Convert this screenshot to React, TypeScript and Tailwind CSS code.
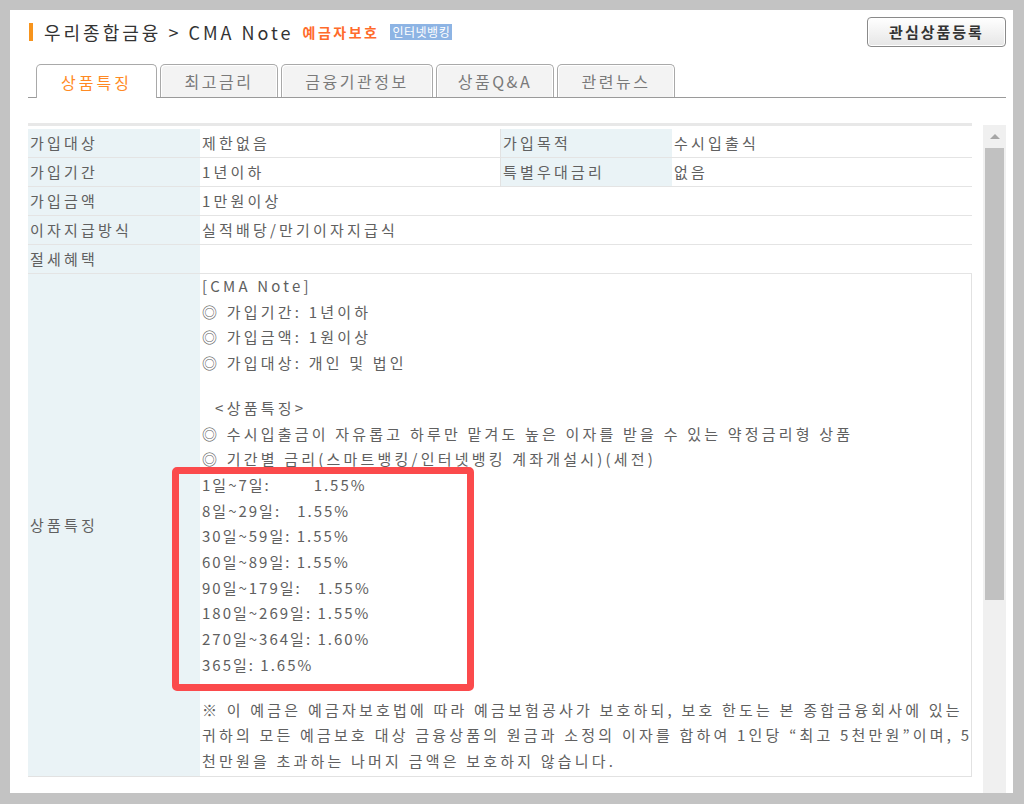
import React from "react";

const tabs = [
  { label: "상품특징", w: "w-[121px]", active: true },
  { label: "최고금리", w: "w-[118px]" },
  { label: "금융기관정보", w: "w-[152px]" },
  { label: "상품Q&A", w: "w-[118px]" },
  { label: "관련뉴스", w: "w-[118px]" },
];

const rates = [
  "1일~7일:        1.55%",
  "8일~29일:   1.55%",
  "30일~59일: 1.55%",
  "60일~89일: 1.55%",
  "90일~179일:   1.55%",
  "180일~269일: 1.55%",
  "270일~364일: 1.60%",
  "365일: 1.65%",
];

function Label({ children, className = "" }: { children?: React.ReactNode; className?: string }) {
  return (
    <div className={"bg-[#eaf3f6] pl-[2px] flex items-center border-b border-[#e4e4e4] " + className}>
      {children}
    </div>
  );
}

function Value({ children, className = "" }: { children?: React.ReactNode; className?: string }) {
  return (
    <div className={"bg-white pl-[2px] flex items-center border-b border-[#e4e4e4] " + className}>
      {children}
    </div>
  );
}

export default function App() {
  return (
    <div className="w-[1024px] h-[804px] bg-[#c3c3c3] pt-[10px] pl-[10px] pr-[11px] pb-[11px] font-['Noto_Sans_CJK_KR','Noto_Sans',sans-serif]">
      <div className="h-full bg-white flex flex-col pl-[18px] pr-[7px]">
        {/* header */}
        <div className="mt-[7px] h-[30px] flex items-center">
          <span className="ml-[1px] w-[4px] h-[18px] bg-[#f7941d]" />
          <span className="ml-[11px] text-[18px] tracking-[3px] text-[#333]">우리종합금융 &gt; CMA Note</span>
          <span className="ml-[9px] text-[14px] font-bold tracking-[2.5px] text-[#ff6b2b]">예금자보호</span>
          <span className="ml-[11px] h-[16px] px-[2px] bg-[#8db4e4] text-white text-[12px] tracking-[0.5px] leading-[16px] flex items-center">인터넷뱅킹</span>
          <button className="ml-auto w-[139px] h-[30px] rounded-[4px] border border-[#8a8a8a] bg-gradient-to-b from-white to-[#e6e6e6] text-[15px] font-bold tracking-[2px] text-[#333] shadow-[inset_0_0_0_1px_#fff]">
            관심상품등록
          </button>
        </div>

        {/* tabs */}
        <div className="mt-[17px] h-[34px] border-b border-[#9a9a9a] flex items-end gap-[3px] pl-[8px]">
          {tabs.map((t, i) =>
            t.active ? (
              <div
                key={i}
                className={t.w + " h-[34px] -mb-[1px] rounded-t-[5px] border border-b-0 border-[#a9a9a9] bg-white flex items-center justify-center text-[16px] tracking-[3px] text-[#ff8a24]"}
              >
                {t.label}
              </div>
            ) : (
              <div
                key={i}
                className={t.w + " h-[33px] rounded-t-[5px] border border-b-0 border-[#a9a9a9] bg-[#f3f3f3] shadow-[inset_1px_1px_0_#fff,inset_-1px_0_0_#fff] flex items-center justify-center text-[16px] tracking-[2.5px] text-[#7a7a7a]"}
              >
                {t.label}
              </div>
            )
          )}
        </div>

        {/* body */}
        <div className="mt-[25px] flex flex-1 min-h-0">
          <div className="w-[944px] self-start border-t-[3px] border-[#e8e8e8] pt-[3px] text-[15px] tracking-[3.2px] text-[#606060]">
            <div className="grid grid-cols-[172px_300px_172px_300px] border-r border-[#e2e2e2] auto-rows-[29px]">
              <Label>가입대상</Label>
              <Value>제한없음</Value>
              <Label className="border-l border-l-[#e2e2e2]">가입목적</Label>
              <Value>수시입출식</Value>

              <Label>가입기간</Label>
              <Value>1년이하</Value>
              <Label className="border-l border-l-[#e2e2e2]">특별우대금리</Label>
              <Value>없음</Value>

              <Label>가입금액</Label>
              <Value className="col-span-3">1만원이상</Value>

              <Label>이자지급방식</Label>
              <Value className="col-span-3">실적배당/만기이자지급식</Value>

              <Label>절세혜택</Label>
              <Value className="col-span-3" />
            </div>

            <div className="grid grid-cols-[172px_772px] h-[503px] border-r border-b border-[#e2e2e2]">
              <div className="bg-[#eaf3f6] pl-[2px] flex items-center">상품특징</div>
              <div className="relative pl-[2px] -mt-[1px] leading-[25.7px] whitespace-pre">
                <div>[CMA Note]</div>
                <div>◎ 가입기간: 1년이하</div>
                <div>◎ 가입금액: 1원이상</div>
                <div>◎ 가입대상: 개인 및 법인</div>
                <div className="mt-[19px]">  &lt;상품특징&gt;</div>
                <div>◎ 수시입출금이 자유롭고 하루만 맡겨도 높은 이자를 받을 수 있는 약정금리형 상품</div>
                <div>◎ 기간별 금리(스마트뱅킹/인터넷뱅킹 계좌개설시)(세전)</div>
                {rates.map((r, i) => (
                  <div key={i} className="tracking-[2px]">{r}</div>
                ))}
                <div className="mt-[19px]">※ 이 예금은 예금자보호법에 따라 예금보험공사가 보호하되, 보호 한도는 본 종합금융회사에 있는</div>
                <div>귀하의 모든 예금보호 대상 금융상품의 원금과 소정의 이자를 합하여 1인당 “최고 5천만원”이며, 5</div>
                <div>천만원을 초과하는 나머지 금액은 보호하지 않습니다.</div>

                <div className="absolute left-[-28px] top-[194px] w-[302px] h-[224px] border-[7px] border-[#fb4a4c] rounded-[5px]" />
              </div>
            </div>
          </div>

          {/* scrollbar */}
          <div className="ml-[11px] mt-[2px] w-[23px] bg-[#f0f0f0] flex flex-col">
            <div className="h-[23px] flex items-center justify-center">
              <div className="w-0 h-0 border-l-[5px] border-r-[5px] border-b-[5px] border-l-transparent border-r-transparent border-b-[#a6a6a6]" />
            </div>
            <div className="mx-[2px] h-[452px] bg-[#c1c1c1]" />
          </div>
        </div>
      </div>
    </div>
  );
}
